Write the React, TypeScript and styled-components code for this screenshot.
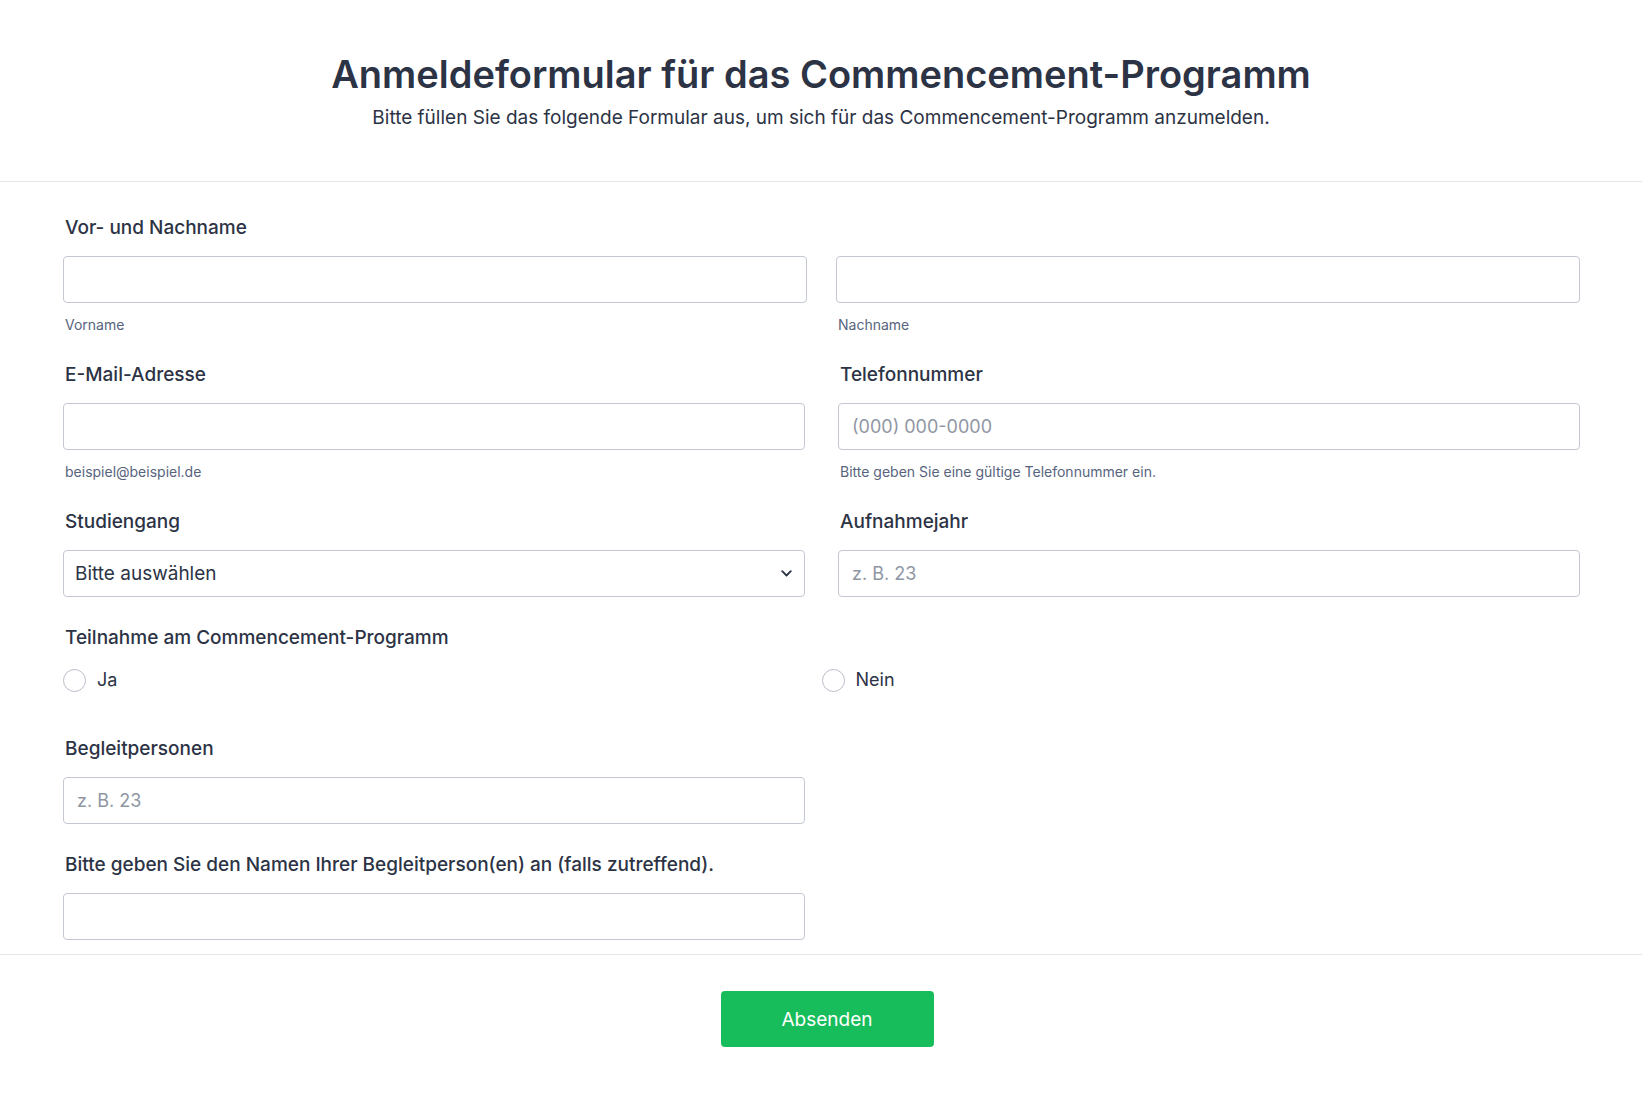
import type { FC } from 'react';
import styled, { createGlobalStyle } from 'styled-components';

const GlobalStyle = createGlobalStyle`
  * {
    box-sizing: border-box;
  }

  body {
    margin: 0;
    background: #ffffff;
    font-family: Inter, "Noto Sans", "Liberation Sans", sans-serif;
    color: #2c3345;
  }
`;

const StyledPage = styled.div`
  width: 100%;
  min-height: 1095px;
  background: #ffffff;
`;

const StyledHeader = styled.header`
  padding: 51px 40px 0;
  height: 182px;
  border-bottom: 1px solid #e3e5ea;
  text-align: center;
`;

const StyledTitle = styled.h1`
  margin: 0;
  font-size: 38px;
  line-height: 46px;
  font-weight: 600;
  color: #2c3345;
`;

const StyledSubtitle = styled.p`
  margin: 9px 0 0;
  font-size: 19px;
  line-height: 24px;
  font-weight: 400;
  color: #2c3345;
`;

const StyledBody = styled.main`
  padding: 34px 62px 14px 63px;
  border-bottom: 1px solid #e3e5ea;
`;

const StyledGrid = styled.div<{ $single?: boolean; $gap?: number }>`
  display: grid;
  grid-template-columns: ${({ $single }) => ($single ? '742px' : '1fr 1fr')};
  column-gap: ${({ $gap }) => $gap ?? 33}px;
`;

const StyledField = styled.div<{ $space?: number }>`
  display: flex;
  flex-direction: column;
  margin-bottom: ${({ $space }) => $space ?? 29}px;
`;

const StyledLabel = styled.label`
  padding-left: 2px;
  font-size: 19px;
  line-height: 24px;
  font-weight: 500;
  color: #2c3345;
  margin-bottom: 16px;
`;

const StyledInput = styled.input`
  width: 100%;
  height: 47px;
  padding: 0 13px;
  border: 1px solid #c3c8d2;
  border-radius: 4px;
  background: #ffffff;
  font-family: inherit;
  font-size: 18px;
  color: #2c3345;
  outline: none;

  &::placeholder {
    color: #8f96a3;
  }
`;

const StyledSubLabel = styled.span`
  display: block;
  margin-top: 13px;
  padding-left: 2px;
  font-size: 14px;
  line-height: 18px;
  color: #57647e;
`;

const StyledSelectBox = styled.div`
  display: flex;
  align-items: center;
  justify-content: space-between;
  height: 47px;
  padding: 0 12px 0 11px;
  border: 1px solid #c3c8d2;
  border-radius: 4px;
  font-size: 19px;
  color: #2c3345;
`;

const StyledChevron = styled.svg`
  width: 11px;
  height: 7px;
`;

const StyledRadioGroup = styled.div`
  display: grid;
  grid-template-columns: 1fr 1fr;
  margin-top: 2px;
`;

const StyledRadioItem = styled.label`
  display: flex;
  align-items: center;
  gap: 11px;
  font-size: 18px;
  line-height: 24px;
  color: #2c3345;
`;

const StyledRadioCircle = styled.span`
  width: 23px;
  height: 23px;
  border-radius: 50%;
  border: 1px solid #b8bec9;
  background: #ffffff;
`;

const StyledFooter = styled.footer`
  display: flex;
  justify-content: center;
  padding: 36px 0 40px 12px;
`;

const StyledButton = styled.button`
  width: 213px;
  height: 56px;
  border: none;
  border-radius: 4px;
  background: #18bd5b;
  color: #ffffff;
  font-family: inherit;
  font-size: 19px;
  font-weight: 400;
  cursor: pointer;
`;

const App: FC = () => {
  return (
    <StyledPage>
      <GlobalStyle />
      <StyledHeader>
        <StyledTitle>Anmeldeformular für das Commencement-Programm</StyledTitle>
        <StyledSubtitle>
          Bitte füllen Sie das folgende Formular aus, um sich für das Commencement-Programm anzumelden.
        </StyledSubtitle>
      </StyledHeader>

      <StyledBody>
        <StyledField>
          <StyledLabel>Vor- und Nachname</StyledLabel>
          <StyledGrid $gap={29}>
            <div>
              <StyledInput type="text" />
              <StyledSubLabel>Vorname</StyledSubLabel>
            </div>
            <div>
              <StyledInput type="text" />
              <StyledSubLabel>Nachname</StyledSubLabel>
            </div>
          </StyledGrid>
        </StyledField>

        <StyledGrid>
          <StyledField>
            <StyledLabel>E-Mail-Adresse</StyledLabel>
            <StyledInput type="email" />
            <StyledSubLabel>beispiel@beispiel.de</StyledSubLabel>
          </StyledField>
          <StyledField>
            <StyledLabel>Telefonnummer</StyledLabel>
            <StyledInput type="tel" placeholder="(000) 000-0000" />
            <StyledSubLabel>Bitte geben Sie eine gültige Telefonnummer ein.</StyledSubLabel>
          </StyledField>
        </StyledGrid>

        <StyledGrid>
          <StyledField>
            <StyledLabel>Studiengang</StyledLabel>
            <StyledSelectBox>
              <span>Bitte auswählen</span>
              <StyledChevron viewBox="0 0 11 7" fill="none">
                <path d="M1.2 1.2L5.5 5.5L9.8 1.2" stroke="#2c3345" strokeWidth="1.8" strokeLinecap="round" strokeLinejoin="round" />
              </StyledChevron>
            </StyledSelectBox>
          </StyledField>
          <StyledField>
            <StyledLabel>Aufnahmejahr</StyledLabel>
            <StyledInput type="text" placeholder="z. B. 23" />
          </StyledField>
        </StyledGrid>

        <StyledField $space={45}>
          <StyledLabel>Teilnahme am Commencement-Programm</StyledLabel>
          <StyledRadioGroup>
            <StyledRadioItem>
              <StyledRadioCircle />
              Ja
            </StyledRadioItem>
            <StyledRadioItem>
              <StyledRadioCircle />
              Nein
            </StyledRadioItem>
          </StyledRadioGroup>
        </StyledField>

        <StyledGrid $single>
          <StyledField>
            <StyledLabel>Begleitpersonen</StyledLabel>
            <StyledInput type="text" placeholder="z. B. 23" />
          </StyledField>
        </StyledGrid>

        <StyledGrid $single>
          <StyledField $space={0}>
            <StyledLabel>Bitte geben Sie den Namen Ihrer Begleitperson(en) an (falls zutreffend).</StyledLabel>
            <StyledInput type="text" />
          </StyledField>
        </StyledGrid>
      </StyledBody>

      <StyledFooter>
        <StyledButton type="button">Absenden</StyledButton>
      </StyledFooter>
    </StyledPage>
  );
};

export default App;
